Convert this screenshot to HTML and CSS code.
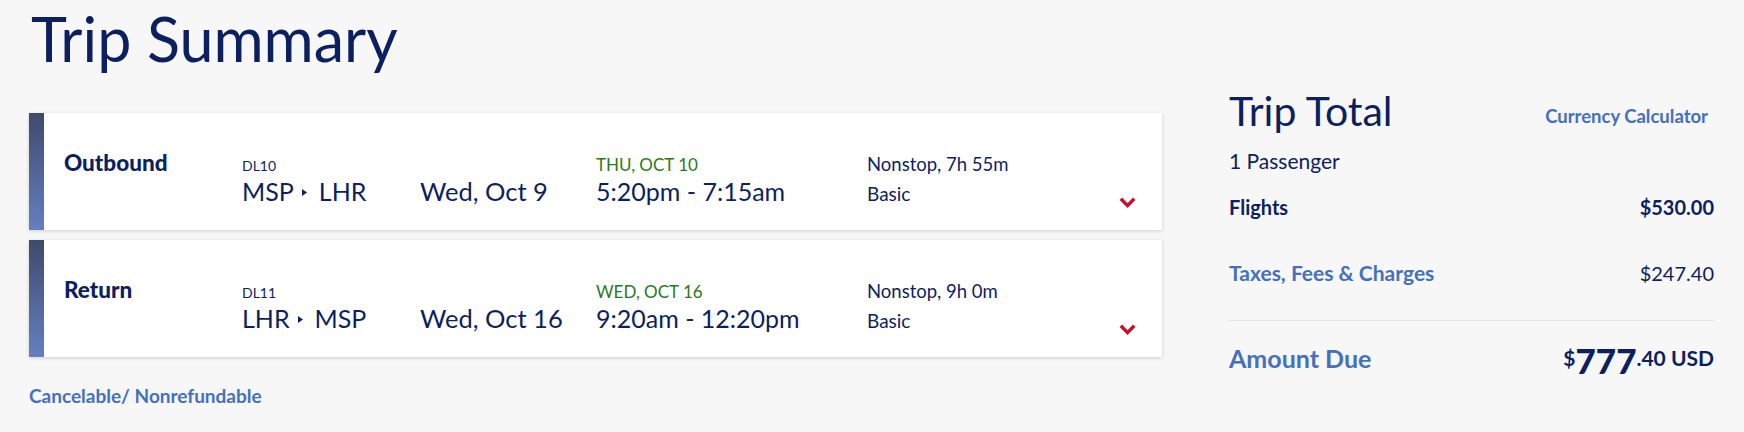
FILE: index.html
```html
<!DOCTYPE html>
<html lang="en">
<head>
    <meta charset="UTF-8">
    <meta name="viewport" content="width=device-width, initial-scale=1.0">
    <title>Trip Summary</title>
    <link rel="stylesheet" href="styles.css">
</head>
<body>

    <div class="page">

        <!-- Flights -->
        <main class="trip">
            <h1 class="trip-title">Trip Summary</h1>

            <div class="flight-card">
                <div class="card-bar"></div>
                <div class="card-body">
                    <div class="leg">Outbound</div>
                    <div class="flight-no">DL10</div>
                    <div class="route">MSP<svg class="route-arrow" viewBox="0 0 5 7"><polygon points="0,0 5,3.5 0,7"/></svg>LHR</div>
                    <div class="date">Wed, Oct 9</div>
                    <div class="arrive">THU, OCT 10</div>
                    <div class="times">5:20pm - 7:15am</div>
                    <div class="stops">Nonstop, 7h 55m</div>
                    <div class="fare">Basic</div>
                    <svg class="chevron" viewBox="0 0 17 11"><polyline points="1.8,1.8 8.5,8.6 15.2,1.8"/></svg>
                </div>
            </div>

            <div class="flight-card">
                <div class="card-bar"></div>
                <div class="card-body">
                    <div class="leg">Return</div>
                    <div class="flight-no">DL11</div>
                    <div class="route">LHR<svg class="route-arrow" viewBox="0 0 5 7"><polygon points="0,0 5,3.5 0,7"/></svg>MSP</div>
                    <div class="date">Wed, Oct 16</div>
                    <div class="arrive">WED, OCT 16</div>
                    <div class="times">9:20am - 12:20pm</div>
                    <div class="stops">Nonstop, 9h 0m</div>
                    <div class="fare">Basic</div>
                    <svg class="chevron" viewBox="0 0 17 11"><polyline points="1.8,1.8 8.5,8.6 15.2,1.8"/></svg>
                </div>
            </div>

            <a class="policy" href="#policy">Cancelable/ Nonrefundable</a>
        </main>

        <!-- Totals -->
        <aside class="total">
            <div class="total-head">
                <h2>Trip Total</h2>
                <a href="#currency">Currency Calculator</a>
            </div>
            <div class="passengers">1 Passenger</div>

            <div class="line flights">
                <span>Flights</span>
                <span>$530.00</span>
            </div>
            <div class="line taxes">
                <a href="#taxes">Taxes, Fees &amp; Charges</a>
                <span>$247.40</span>
            </div>

            <div class="amount">
                <span class="amount-label">Amount Due</span>
                <span class="price">
                    <span class="price-small">$</span><span class="price-big">777</span><span class="price-small">.40 USD</span>
                </span>
            </div>
        </aside>

    </div>

</body>
</html>
```

FILE: styles.css
```css
body {
    font-family: Lato, "Open Sans", sans-serif;
    margin: 0;
    padding: 0;
    background-color: #f7f7f7;
    color: #0c1f5f;
    line-height: 1.2;
}

a {
    color: #4470be;
    text-decoration: none;
    font-weight: 700;
}

.page {
    display: flex;
    align-items: flex-start;
    padding: 0 30px 0 29px;
}

/* Left column */
.trip {
    flex: 1;
}

.trip-title {
    margin: 0 0 38px;
    padding: 2px 0 0 2px;
    font-size: 61px;
    font-weight: 400;
    line-height: 1.2;
}

/* Flight card */
.flight-card {
    display: flex;
    height: 117px;
    margin-bottom: 10px;
    background: white;
    box-shadow: 0 1px 4px rgba(0, 0, 0, 0.16);
}

.card-bar {
    width: 15px;
    background: linear-gradient(#3f4a6c, #6480c0);
}

.card-body {
    flex: 1;
    display: grid;
    grid-template-columns: 178px 178px 176px 271px 1fr 17px;
    grid-template-areas:
        "leg num   .    day   stops ."
        ".   route date times fare  chev";
    align-items: baseline;
    align-content: start;
    padding: 36px 26px 0 20px;
}

.leg {
    grid-area: leg;
    font-size: 22.5px;
    font-weight: 900;
}

.flight-no {
    grid-area: num;
    font-size: 14px;
}

.route {
    grid-area: route;
    font-size: 25px;
}

.route-arrow {
    width: 5px;
    height: 7px;
    margin: 0 12px 0 8px;
    vertical-align: 5px;
    fill: #0c1f5f;
}

.date {
    grid-area: date;
    font-size: 25.5px;
}

.arrive {
    grid-area: day;
    font-size: 17px;
    color: #2a7a1c;
}

.times {
    grid-area: times;
    font-size: 25px;
}

.stops {
    grid-area: stops;
    font-size: 18.5px;
}

.fare {
    grid-area: fare;
    font-size: 19px;
}

.chevron {
    grid-area: chev;
    align-self: start;
    width: 17px;
    height: 11px;
    margin-top: 21px;
    fill: none;
    stroke: #c8102e;
    stroke-width: 3.4;
}

.policy {
    display: block;
    margin-top: 28px;
    font-size: 19px;
    line-height: 22px;
}

/* Right column */
.total {
    width: 485px;
    margin-left: 67px;
    padding-top: 87px;
}

.total-head {
    display: flex;
    justify-content: space-between;
    align-items: flex-start;
}

.total-head h2 {
    margin: 0;
    font-size: 41px;
    font-weight: 400;
    line-height: 48px;
}

.total-head a {
    padding: 18px 6px 0 0;
    font-size: 18.5px;
    line-height: 22px;
}

.passengers {
    margin-top: 13px;
    font-size: 21px;
    line-height: 26px;
}

.line {
    display: flex;
    justify-content: space-between;
    font-size: 20px;
    line-height: 26px;
}

.flights {
    margin-top: 20px;
    font-weight: 700;
}

.taxes {
    margin-top: 40px;
    padding-bottom: 34px;
    border-bottom: 1px solid #e1e4ea;
}

.taxes a {
    font-size: 21px;
}

.amount {
    display: flex;
    justify-content: space-between;
    align-items: flex-start;
    margin-top: 22px;
}

.amount-label {
    font-size: 25px;
    font-weight: 700;
    line-height: 30px;
    color: #4470be;
}

.price {
    display: flex;
    align-items: flex-start;
    font-weight: 700;
}

.price-big {
    font-size: 35px;
    font-weight: 900;
    line-height: 34px;
}

.price-small {
    margin-top: 5px;
    font-size: 21px;
    line-height: 20px;
}
```
